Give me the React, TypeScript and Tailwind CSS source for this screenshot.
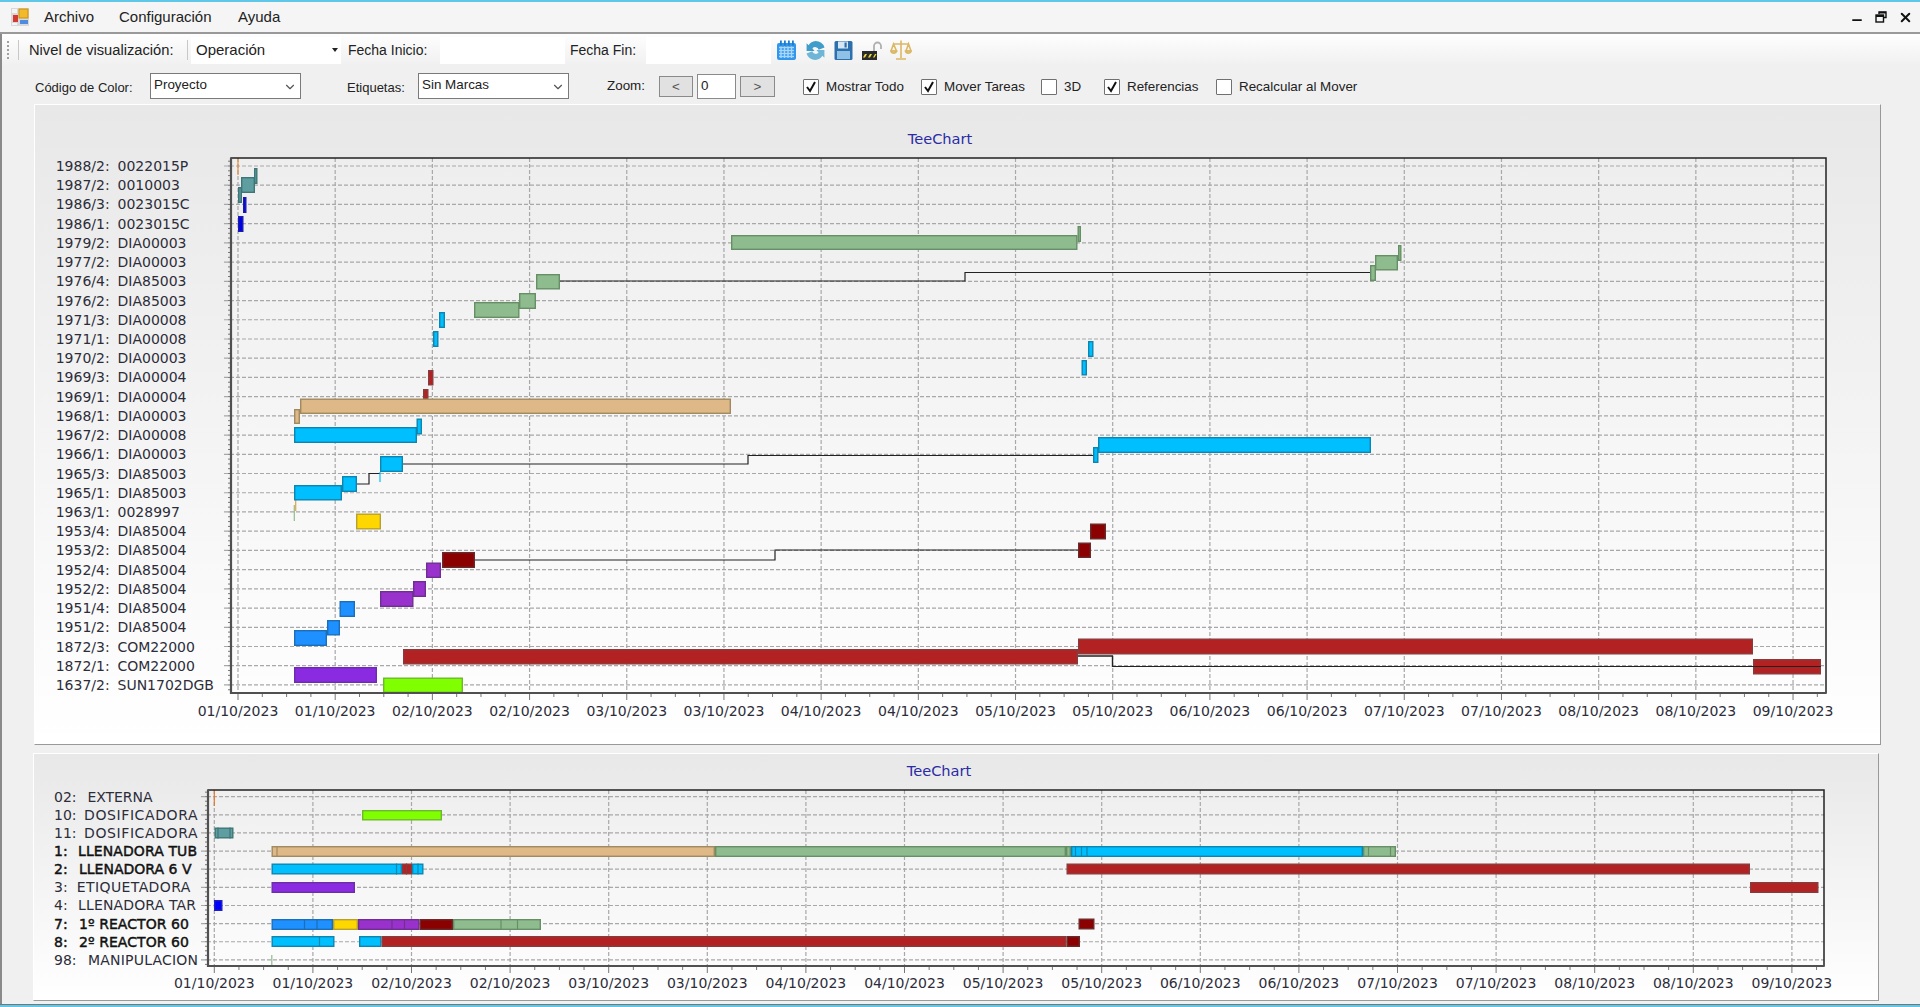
import { ChevronDown, Minus, X } from "lucide-react";

type Bar = [number, number, number, number, string, number[]?];
type RowLabel = { code: string; name: string; nameX: number; nameW?: number; bold?: boolean };
type Line = string;

const borderOf: Record<string, string> = {
  "#00bfff": "#0c86b0",
  "#8fbc8f": "#668f66",
  "#5f9ea0": "#3e7577",
  "#0000e6": "#1a1ab0",
  "#0000ff": "#2020c0",
  "#b22222": "#8a3a3a",
  "#deb887": "#a08a60",
  "#ffd700": "#b8a030",
  "#8b0000": "#6a2a2a",
  "#9932cc": "#6f2f92",
  "#1e90ff": "#1a6fb8",
  "#8a2be2": "#6a2fa8",
  "#7fff00": "#6cb82c",
};

const dates = [
  "01/10/2023", "01/10/2023", "02/10/2023", "02/10/2023", "03/10/2023", "03/10/2023",
  "04/10/2023", "04/10/2023", "05/10/2023", "05/10/2023", "06/10/2023", "06/10/2023",
  "07/10/2023", "07/10/2023", "08/10/2023", "08/10/2023", "09/10/2023",
];

const topLabels: RowLabel[] = [
  ["1988/2:", "0022015P"], ["1987/2:", "0010003"], ["1986/3:", "0023015C"], ["1986/1:", "0023015C"],
  ["1979/2:", "DIA00003"], ["1977/2:", "DIA00003"], ["1976/4:", "DIA85003"], ["1976/2:", "DIA85003"],
  ["1971/3:", "DIA00008"], ["1971/1:", "DIA00008"], ["1970/2:", "DIA00003"], ["1969/3:", "DIA00004"],
  ["1969/1:", "DIA00004"], ["1968/1:", "DIA00003"], ["1967/2:", "DIA00008"], ["1966/1:", "DIA00003"],
  ["1965/3:", "DIA85003"], ["1965/1:", "DIA85003"], ["1963/1:", "0028997"], ["1953/4:", "DIA85004"],
  ["1953/2:", "DIA85004"], ["1952/4:", "DIA85004"], ["1952/2:", "DIA85004"], ["1951/4:", "DIA85004"],
  ["1951/2:", "DIA85004"], ["1872/3:", "COM22000"], ["1872/1:", "COM22000"], ["1637/2:", "SUN1702DGB"],
].map(([code, name]) => ({ code, name, nameX: 117.5 }));

const bottomLabels: RowLabel[] = [
  { code: "02:", name: "EXTERNA", nameX: 87.5, nameW: 65 },
  { code: "10:", name: "DOSIFICADORA", nameX: 84, nameW: 113.5 },
  { code: "11:", name: "DOSIFICADORA", nameX: 84, nameW: 113.5 },
  { code: "1:", name: "LLENADORA TUB", nameX: 78, nameW: 119, bold: true },
  { code: "2:", name: "LLENADORA 6 V", nameX: 79, nameW: 112.5, bold: true },
  { code: "3:", name: "ETIQUETADORA", nameX: 76.8, nameW: 113.5 },
  { code: "4:", name: "LLENADORA TAR", nameX: 78, nameW: 118 },
  { code: "7:", name: "1º REACTOR 60", nameX: 79, nameW: 110, bold: true },
  { code: "8:", name: "2º REACTOR 60", nameX: 79, nameW: 110, bold: true },
  { code: "98:", name: "MANIPULACION", nameX: 88, nameW: 110 },
];

const cyan = "#00bfff";
const sage = "#8fbc8f";
const teal = "#5f9ea0";
const brick = "#b22222";
const tan = "#deb887";
const gold = "#ffd700";
const maroon = "#8b0000";
const orchid = "#9932cc";
const dodger = "#1e90ff";
const violet = "#8a2be2";
const lime = "#7fff00";

const topBars: Bar[] = [
  [254, 257.5, 168, 184, teal],
  [241, 255, 177, 193, teal],
  [238, 242, 187, 203, teal],
  [243, 246.5, 197, 213, "#0000e6"],
  [238, 243.5, 216, 232, "#0000e6"],
  [731, 1077.5, 235, 250, sage],
  [1077.5, 1081, 226, 242, sage],
  [474, 519.5, 302, 318, sage],
  [519, 536, 293, 309, sage],
  [536, 560, 274, 289.5, sage],
  [1375, 1398, 255, 270.5, sage],
  [1398, 1401.5, 245, 261, sage],
  [1370, 1376, 265, 281, sage],
  [439, 445, 312, 328, cyan],
  [433, 438.5, 331, 347, cyan],
  [1088, 1093.5, 341, 357, cyan],
  [1081.5, 1087, 360, 375.5, cyan],
  [428, 433.5, 370, 385.5, brick],
  [423, 428.5, 389, 404, brick],
  [300, 731, 398.5, 414, tan],
  [294, 300, 409, 424, tan],
  [294, 417, 427, 443, cyan],
  [416.5, 422, 418.5, 434.5, cyan],
  [1098, 1371, 437, 453, cyan],
  [1093, 1098.5, 447, 463, cyan],
  [380, 403, 456, 472, cyan],
  [342, 357, 476, 492, cyan],
  [294, 342, 485, 500.5, cyan],
  [356, 381, 513.5, 529.5, gold],
  [442, 475, 552, 568, maroon],
  [1090, 1106, 523.5, 539.5, maroon],
  [1078, 1091, 542.5, 558, maroon],
  [426, 441, 562.5, 578, orchid],
  [413, 426, 581, 597, orchid],
  [380, 413.5, 591, 607, orchid],
  [339.5, 355, 601, 617, dodger],
  [327, 340, 620, 635.5, dodger],
  [294, 327, 630, 646, dodger],
  [403, 1078, 649, 664.5, brick],
  [1078, 1753, 638.5, 654.5, brick],
  [1753, 1821, 659, 674.5, brick],
  [294, 377, 667, 683, violet],
  [383, 463, 677.5, 693, lime],
];

const topLines: Line[] = [
  "M560 281H965V272.5H1370",
  "M403 464H748V455.5H1093",
  "M357 484H369V473.5H380",
  "M475 560H775V550H1078",
  "M1078 656H1112.5V666.5H1821",
];

const bottomBars: Bar[] = [
  [362, 442, 810, 820.5, lime],
  [214.5, 233.5, 827.5, 838.5, teal, [218, 230]],
  [271.5, 715, 846, 857, tan, [277]],
  [715, 1066, 846, 857, sage],
  [1066, 1071, 846, 857, sage],
  [1071, 1363, 846, 857, cyan, [1075.5, 1081.5, 1087]],
  [1363, 1396, 846, 857, sage, [1368.5, 1390.5]],
  [271.5, 402, 863.5, 874.5, cyan, [396.5]],
  [402, 412, 863.5, 874.5, brick, [406.5]],
  [412, 423.5, 863.5, 874.5, cyan, [418]],
  [1066.5, 1750, 863.5, 874.5, brick],
  [271.5, 355, 882, 893, violet],
  [1750, 1818.5, 882, 893, brick],
  [214, 222.5, 900, 911, "#0000ff"],
  [271.5, 333, 919, 930, dodger, [304.5, 317]],
  [333, 358, 919, 930, gold],
  [358, 419.5, 919, 930, orchid, [392, 404.5]],
  [419.5, 453, 919, 930, maroon],
  [453, 541, 919, 930, sage, [501, 517.5]],
  [1078.5, 1094.5, 918.5, 929.5, maroon],
  [271.5, 334.5, 936, 947, cyan, [319.5]],
  [359, 381.5, 936, 947, cyan],
  [381.5, 1066.5, 936, 947, brick],
  [1066.5, 1080, 936, 947, maroon],
];

type ChartProps = {
  view: string;
  title: [number, number];
  plot: { left: number; right: number; top: number; bottom: number };
  gridStart: number;
  gridStep: number;
  rowStart: number;
  rowStep: number;
  labels: RowLabel[];
  labelX: number;
  dateY: number;
  bars: Bar[];
  lines: Line[];
  children?: React.ReactNode;
};

function GanttChart({ view, title, plot, gridStart, gridStep, rowStart, rowStep, labels, labelX, dateY, bars, lines, children }: ChartProps) {
  const majors = dates.map((_, i) => gridStart + gridStep * i);
  const minors: number[] = [];
  for (let x = gridStart; x < plot.right; x += gridStep / 4) minors.push(x);
  const rows = labels.map((_, i) => rowStart + rowStep * i);
  const rowMinors: number[] = [];
  for (let y = rowStart - rowStep; y < plot.bottom; y += rowStep / 4) {
    if (y > plot.top) rowMinors.push(y);
  }
  return (
    <svg viewBox={view} className="block h-full w-full font-['DejaVu_Sans',sans-serif]">
      <text x={title[0]} y={title[1]} textAnchor="middle" fontSize="14.6" fill="#2b2ba6">TeeChart</text>
      <rect x={plot.left} y={plot.top} width={plot.right - plot.left} height={plot.bottom - plot.top} fill="#ffffff" fillOpacity="0.2" />

      {rows.map((y) => (
        <line key={y} x1={plot.left - 7} x2={plot.right} y1={y} y2={y} stroke="#a8a8a8" strokeWidth="1.2" strokeDasharray="4 2" />
      ))}
      {majors.map((x) => (
        <line key={x} x1={x} x2={x} y1={plot.top} y2={plot.bottom} stroke="#a8a8a8" strokeWidth="1.2" strokeDasharray="4 2" />
      ))}
      {minors.map((x, i) => (
        <line key={x} x1={x} x2={x} y1={plot.bottom} y2={plot.bottom + (i % 4 === 0 ? 7 : 4)} stroke="#777" />
      ))}
      {rowMinors.map((y) => (
        <line key={y} x1={plot.left - 3} x2={plot.left} y1={y} y2={y} stroke="#777" />
      ))}

      {lines.map((d) => (
        <path key={d} d={d} fill="none" stroke="#222" strokeWidth="1.2" />
      ))}
      {children}
      {bars.map(([x0, x1, y0, y1, color, seps], i) => (
        <g key={i}>
          <rect x={x0 + 0.7} y={y0 + 0.7} width={Math.max(x1 - x0 - 1.4, 1)} height={y1 - y0 - 1.4} fill={color} stroke={borderOf[color]} strokeWidth="1.4" />
          {seps?.map((s) => (
            <line key={s} x1={s} x2={s} y1={y0} y2={y1} stroke={borderOf[color]} strokeWidth="1.2" />
          ))}
        </g>
      ))}
      {/* conectores que pasan por encima de la ultima barra */}
      {lines.slice(-1).map((d) => (
        <path key={d} d={d} fill="none" stroke="#222" strokeWidth="1.2" />
      ))}

      <rect x={plot.left} y={plot.top} width={plot.right - plot.left} height={plot.bottom - plot.top} fill="none" stroke="#222" strokeWidth="1.5" />
      <path d={`M${plot.left} ${plot.top}V${plot.bottom}H${plot.right}`} fill="none" stroke="#505050" strokeWidth="2.2" />

      {labels.map((l, i) => (
        <text
          key={i}
          y={rows[i] + 5}
          fontSize="14"
          fill={l.bold ? "#111" : "#2d2d3a"}
          stroke={l.bold ? "#111" : "none"}
          strokeWidth={l.bold ? 0.45 : 0}
        >
          <tspan x={labelX}>{l.code}</tspan>
          <tspan x={l.nameX} textLength={l.nameW}>{l.name}</tspan>
        </text>
      ))}
      {dates.map((d, i) => (
        <text key={i} x={majors[i]} y={dateY} textAnchor="middle" fontSize="14" fill="#2d2d3a">{d}</text>
      ))}
    </svg>
  );
}

function AppIcon() {
  return (
    <svg width="18" height="18" viewBox="0 0 18 18" className="ml-[11px]">
      <rect width="18" height="18" fill="#d8d8d8" />
      <rect x="1" y="1" width="5" height="4" fill="#f4f4f4" />
      <rect x="8" y="1" width="9" height="9" fill="#f2b92c" stroke="#c98f10" />
      <rect x="2" y="7" width="5" height="7" fill="#d43a32" />
      <rect x="9" y="12" width="8" height="4" fill="#4f8be0" />
      <rect x="1" y="15" width="5" height="2" fill="#f4f4f4" />
    </svg>
  );
}

function CalendarIcon() {
  return (
    <svg width="21" height="21" viewBox="0 0 21 21">
      <rect x="1" y="3" width="19" height="17" rx="2" fill="#2f97ee" />
      {[4, 8, 12, 16].map((x) => (
        <rect key={x} x={x} y="0.5" width="1.8" height="5" fill="#1c7dd0" />
      ))}
      {[7.5, 10.5, 13.5, 16.5].map((y) => (
        <line key={y} x1="3" x2="18" y1={y} y2={y} stroke="#a9d6fa" strokeWidth="1.4" />
      ))}
      {[5, 8.5, 12, 15.5].map((x) => (
        <line key={x} x1={x} x2={x} y1="6.5" y2="18" stroke="#a9d6fa" strokeWidth="1.4" />
      ))}
    </svg>
  );
}

function RefreshIcon() {
  return (
    <svg width="21" height="21" viewBox="0 0 21 21">
      <path d="M10.5 1a9.5 9.5 0 0 1 9 6.5l-5.8 2.2A3.6 3.6 0 0 0 7.4 8.5l2.2 2.5H1.6V3.2l2 2.1A9.5 9.5 0 0 1 10.5 1z" fill="#3f9ccb" />
      <path d="M10.5 20a9.5 9.5 0 0 1-9-6.5l5.8-2.2a3.6 3.6 0 0 0 6.3 1.2l-2.2-2.5h8v7.8l-2-2.1a9.5 9.5 0 0 1-6.9 4.3z" fill="#6fb5d6" />
    </svg>
  );
}

function SaveIcon() {
  return (
    <svg width="19" height="21" viewBox="0 0 19 21">
      <rect x="0.5" y="1" width="18" height="19" rx="1.5" fill="#2e6fae" />
      <rect x="4" y="1.5" width="10" height="7" fill="#d5e7f5" />
      <rect x="10.5" y="2.5" width="2.2" height="5" fill="#2e6fae" />
      <rect x="3" y="11" width="13" height="8" fill="#8fc1e6" />
    </svg>
  );
}

function LockIcon() {
  return (
    <svg width="21" height="21" viewBox="0 0 21 21">
      <path d="M13 11V6a3.5 3.5 0 0 1 7 0V9" fill="none" stroke="#b0b0b0" strokeWidth="1.8" />
      <rect x="1" y="11" width="15" height="9" fill="#2a2a2a" />
      <path d="M2 17.5l2-3.5h2l-2 3.5zM7 17.5l2-3.5h2l-2 3.5zM12 17.5l2-3.5h1.5l-2 3.5z" fill="#f0d838" />
    </svg>
  );
}

function ScalesIcon() {
  return (
    <svg width="22" height="22" viewBox="0 0 22 22" fill="none" stroke="#dcb866" strokeWidth="1.6">
      <path d="M11 1.5V19M3.5 5h15M6 20h10" />
      <path d="M3.5 5L1 12h5.5zM18.5 5L16 12h5z" />
      <path d="M1 12a2.8 2.6 0 0 0 5.5 0zM15.5 12a2.8 2.6 0 0 0 5.5 0z" fill="#ecd08c" />
    </svg>
  );
}

function RestoreIcon() {
  return (
    <svg width="12" height="12" viewBox="0 0 12 12" fill="none" stroke="#111" strokeWidth="1.4">
      <path d="M4 3V1h7v5.5H8.5" />
      <rect x="1" y="4" width="7.5" height="7" />
      <path d="M1 5h7.5M4 1.6h7" strokeWidth="1.8" />
    </svg>
  );
}

function Combo({ text, ml }: { text: string; ml: string }) {
  return (
    <div className={`flex h-[26px] w-[151px] items-start justify-between border border-[#7a7a7a] bg-white pl-[3px] pr-[3px] ${ml}`}>
      <span className="leading-[22px]">{text}</span>
      <ChevronDown size={14} strokeWidth={2} className="mt-[6px] text-[#555]" />
    </div>
  );
}

function Check({ label, checked, width }: { label: string; checked?: boolean; width: string }) {
  return (
    <div className={`mt-[2px] flex items-center ${width}`}>
      <div className="flex size-[16px] items-center justify-center rounded-[1px] border border-[#707070] bg-white">
        {checked && (
          <svg width="12" height="12" viewBox="0 0 12 12">
            <path d="M2 6l3 4 5-9" fill="none" stroke="#111" strokeWidth="2" />
          </svg>
        )}
      </div>
      <span className="ml-[7px] whitespace-nowrap">{label}</span>
    </div>
  );
}

export default function App() {
  return (
    <div className="flex h-[1007px] w-full flex-col overflow-hidden bg-[#f0f0f0] font-['Liberation_Sans',sans-serif] text-[14px] text-[#222]">
      <div className="h-[2px] bg-[#5fc8e8]" />

      {/* Menu */}
      <div className="flex h-[30px] items-center bg-[#f5f5f5] text-[15px]">
        <AppIcon />
        <span className="ml-[15px] w-[51px]">Archivo</span>
        <span className="ml-[24px] w-[94px]">Configuración</span>
        <span className="ml-[25px]">Ayuda</span>
        <div className="ml-auto flex items-center gap-[11px] pr-[7px]">
          <Minus size={14} strokeWidth={3} className="mt-[5px] text-[#111]" />
          <RestoreIcon />
          <X size={15} strokeWidth={3.2} className="text-[#111]" />
        </div>
      </div>
      <div className="h-[2px] bg-[#999]" />

      <div className="flex min-h-0 flex-1 flex-col border-l-2 border-[#8a8a8a]">
        {/* Toolbar */}
        <div className="flex h-[32px] items-center bg-linear-to-b from-[#fefefe] to-[#f0f0f0]">
          <div className="ml-[5px] flex flex-col gap-[2px]">
            {[0, 1, 2, 3, 4].map((i) => (
              <div key={i} className="size-[2px] bg-[#a0a0a0]" />
            ))}
          </div>
          <div className="ml-[9px] h-[20px] w-px bg-[#c8c8c8]" />
          <span className="ml-[10px] w-[147px] whitespace-nowrap text-[14.7px]">Nivel de visualización:</span>
          <div className="ml-[11px] h-[20px] w-px bg-[#c8c8c8]" />
          <div className="ml-[3px] flex h-[27px] w-[150px] items-center justify-between bg-white pl-[5px] pr-[3px]">
            <span className="text-[15px]">Operación</span>
            <div className="size-0 border-x-[3px] border-t-[4px] border-x-transparent border-t-[#222]" />
          </div>
          <span className="ml-[7px] w-[85px]">Fecha Inicio:</span>
          <div className="ml-[7px] h-[27px] w-[125px] bg-white" />
          <span className="ml-[5px] w-[69px]">Fecha Fin:</span>
          <div className="ml-[7px] h-[27px] w-[125px] bg-white" />
          <div className="ml-[5px] flex items-center gap-[8px]">
            <CalendarIcon />
            <RefreshIcon />
            <SaveIcon />
            <LockIcon />
            <ScalesIcon />
          </div>
        </div>

        {/* Opciones */}
        <div className="mt-[7px] flex h-[26px] items-center text-[13.4px]">
          <span className="ml-[33px] mt-[3px] w-[103px] whitespace-nowrap text-[13px]">Código de Color:</span>
          <Combo text="Proyecto" ml="ml-[12px]" />
          <span className="ml-[46px] mt-[3px] w-[58px] text-[13px]">Etiquetas:</span>
          <Combo text="Sin Marcas" ml="ml-[13px]" />
          <span className="ml-[38px] w-[42px]">Zoom:</span>
          <button className="ml-[10px] mt-[1px] h-[21px] w-[34px] border border-[#8a8a8a] bg-[#e1e1e1] leading-none text-[#555]">&lt;</button>
          <div className="ml-[4px] h-[25px] w-[39px] border border-[#8a8a8a] bg-white pl-[3px] leading-[22px]">0</div>
          <button className="ml-[4px] mt-[1px] h-[21px] w-[35px] border border-[#8a8a8a] bg-[#e1e1e1] leading-none text-[#555]">&gt;</button>
          <div className="w-[28px]" />
          <Check label="Mostrar Todo" checked width="w-[118px]" />
          <Check label="Mover Tareas" checked width="w-[120px]" />
          <Check label="3D" width="w-[63px]" />
          <Check label="Referencias" checked width="w-[112px]" />
          <Check label="Recalcular al Mover" width="w-[143px]" />
        </div>

        {/* Grafico de tareas */}
        <div className="ml-[32px] mt-[5px] h-[641px] w-[1847px] border border-r-[#999] border-b-[#999] border-t-white border-l-white bg-linear-to-b from-[#e8e8e8] to-white">
          <GanttChart
            view="35 105 1845 639"
            title={[940, 144]}
            plot={{ left: 231, right: 1826, top: 158, bottom: 693 }}
            gridStart={238}
            gridStep={97.19}
            rowStart={166}
            rowStep={19.22}
            labels={topLabels}
            labelX={55.7}
            dateY={716}
            bars={topBars}
            lines={topLines}
          >
            <line x1="238" x2="238" y1="158" y2="175" stroke="#e89040" strokeWidth="1.2" />
            <line x1="380" x2="380" y1="472" y2="482" stroke="#00bfff" strokeWidth="1.2" />
            <line x1="295.7" x2="295.7" y1="500" y2="511" stroke="#e8a040" strokeWidth="1.2" />
            <line x1="294.3" x2="294.3" y1="505" y2="521" stroke="#8fbc8f" strokeWidth="1.2" />
          </GanttChart>
        </div>

        {/* Grafico de maquinas */}
        <div className="ml-[31px] mt-[8px] h-[248px] w-[1846px] border border-r-[#999] border-b-[#999] border-t-white border-l-white bg-linear-to-b from-[#e8e8e8] to-white">
          <GanttChart
            view="34 754 1844 246"
            title={[939, 776]}
            plot={{ left: 208, right: 1824, top: 790, bottom: 966 }}
            gridStart={214.3}
            gridStep={98.6}
            rowStart={796.7}
            rowStep={18.13}
            labels={bottomLabels}
            labelX={54}
            dateY={988}
            bars={bottomBars}
            lines={[]}
          >
            <line x1="214.3" x2="214.3" y1="790" y2="806" stroke="#e07830" strokeWidth="1.2" />
            <line x1="271.8" x2="271.8" y1="955" y2="966" stroke="#8fbc8f" strokeWidth="1.2" />
          </GanttChart>
        </div>
      </div>

      <div className="h-px bg-[#777]" />
      <div className="h-[2px] bg-[#5fc8e8]" />
    </div>
  );
}
